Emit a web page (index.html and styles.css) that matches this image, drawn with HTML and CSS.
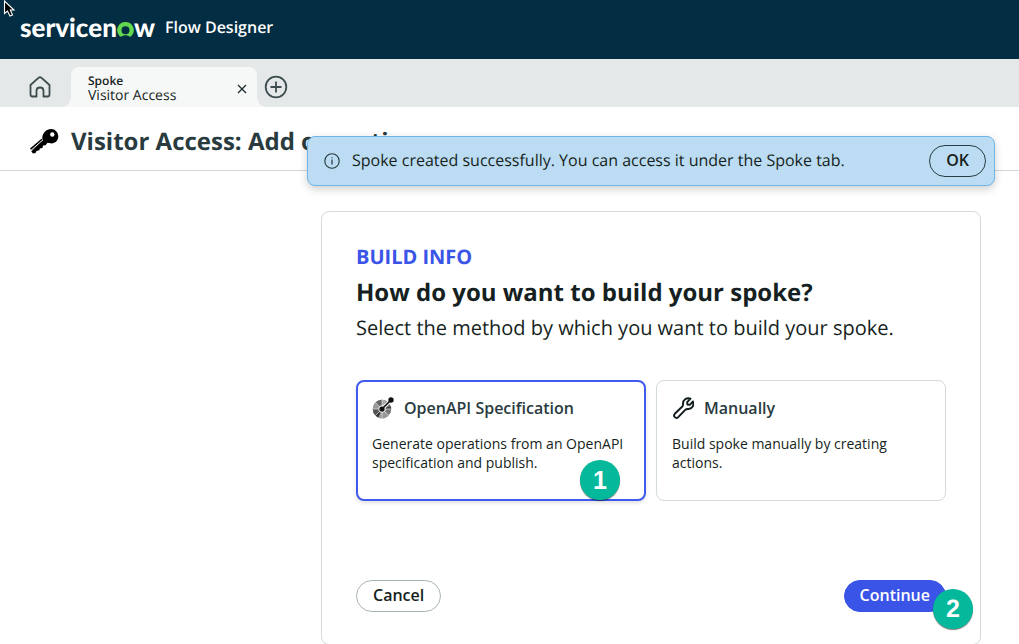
FILE: index.html
```html
<!DOCTYPE html>
<html lang="en">
<head>
<meta charset="utf-8">
<title>Flow Designer</title>
<link rel="stylesheet" href="styles.css">
</head>
<body>
<header class="topbar">
  <div class="brand" aria-label="servicenow"><span>servicen</span><svg class="brand-o" width="17" height="15" viewBox="0 0 17 15" aria-hidden="true"><path d="M8.500 0A8.300 8.300 0 0 0 2.500 14Q3.800 15.300 5 14.300Q8.500 12 12 14.300Q13.200 15.300 14.500 14A8.300 8.300 0 0 0 8.500 0ZM8.500 4.200A4 4 0 1 1 8.500 12.200A4 4 0 1 1 8.500 4.200Z" fill="#62d84e" fill-rule="evenodd"/></svg><span>w</span></div>
  <div class="product">Flow Designer</div>
</header>
<svg class="pointer" width="14" height="18" viewBox="0 0 14 18" aria-hidden="true"><path d="M1.500 1V13.500L4.500 11L7 16L9.500 15L7.300 10H11Z" fill="#000" stroke="#fff" stroke-width="1.100"/></svg>

<nav class="tabs" aria-label="Open tabs">
  <button class="icon-btn home" aria-label="Home"><svg width="22" height="22" viewBox="0 0 22 22" fill="none" stroke="#3d4d4f" stroke-width="1.800" stroke-linejoin="round"><path d="M1.500 9L9.700 1.700Q11 .7 12.300 1.700L20.500 9V18.500Q20.500 20.500 18.500 20.500H14.500V15Q14.500 11.500 11 11.500T7.500 15V20.500H3.500Q1.500 20.500 1.500 18.500Z"/></svg></button>
  <div class="tab">
    <div class="tab-text"><strong>Spoke</strong><span>Visitor Access</span></div>
    <button class="icon-btn close" aria-label="Close tab"><svg width="10" height="10" viewBox="0 0 10 10" stroke="#1d2b2e" stroke-width="1.300"><path d="M1 1L9 9M9 1L1 9"/></svg></button>
  </div>
  <button class="icon-btn add" aria-label="New tab"><svg width="24" height="24" viewBox="0 0 24 24" fill="none" stroke="#3d4d4f" stroke-width="1.800"><circle cx="12" cy="12" r="10.300"/><path d="M12 6.500V17.500M6.500 12H17.500"/></svg></button>
</nav>

<div class="titlebar">
  <svg width="29" height="26" viewBox="0 0 29 26" aria-hidden="true"><path d="M20.500 1C24.500 .5 28.300 4 28.300 8.500C28.200 12.800 24.500 16 20.500 15.300L17.500 14.800L15.500 17.300L13 17.500L12.500 20L9.800 20.500L9.300 22.200L6.500 23L5.500 25L3 25.500L1.300 23.500L12.500 12C11.500 7 14.500 1.800 20.500 1Z" fill="#000"/><path d="M0 20.500L11.500 10.800L13.500 12.500L1.500 22.500Z" fill="#000"/><path d="M1 22.300L13 11.800" stroke="#fff" stroke-width="1"/><circle cx="22.300" cy="6.500" r="2.200" fill="#fff"/></svg>
  <h1>Visitor Access: Add operations</h1>
</div>

<div class="banner" role="status">
  <svg width="16" height="16" viewBox="0 0 16 16" fill="none" stroke="#22343a" aria-hidden="true"><circle cx="8" cy="8" r="7.200" stroke-width="1.100"/><path d="M8 6.500V11.500M8 4.200V5.300" stroke-width="1.200"/></svg>
  <p>Spoke created successfully. You can access it under the Spoke tab.</p>
  <button class="pill ok">OK</button>
</div>

<main class="content">
  <section class="panel">
    <p class="eyebrow">BUILD INFO</p>
    <h2>How do you want to build your spoke?</h2>
    <p class="lead">Select the method by which you want to build your spoke.</p>
    <div class="options">
      <button class="option selected" aria-pressed="true">
        <span class="option-title"><svg width="22" height="22" viewBox="0 0 22 22" aria-hidden="true"><circle cx="10" cy="12" r="6.500" fill="none" stroke="#777" stroke-width="5.500"/><g fill="none" stroke-width="5.500"><path d="M3.500 12A6.500 6.500 0 0 1 5.400 7.400" stroke="#999"/><path d="M5.400 7.400A6.500 6.500 0 0 1 10 5.500" stroke="#666"/><path d="M10 5.500A6.500 6.500 0 0 1 13 6.200" stroke="#aaa"/><path d="M16.200 10A6.500 6.500 0 0 1 16.500 12" stroke="#444"/><path d="M5.400 16.600A6.500 6.500 0 0 1 3.500 12" stroke="#555"/><path d="M7.500 18A6.500 6.500 0 0 1 5.400 16.600" stroke="#333"/><path d="M15 16.200A6.500 6.500 0 0 1 7.500 18" stroke="#999"/></g><path d="M.5 12H6M3.300 5.300L8 10M10 2.500V8M3.300 18.700L8 14M10 16V21.500M12 14L17 18.700M14 12H20" stroke="#eee" stroke-width=".6"/><circle cx="10" cy="12" r="3.400" fill="#ddd"/><path d="M10 12L19 3" stroke="#fff" stroke-width="3.600"/><path d="M10 12L19 3" stroke="#111" stroke-width="1.700"/><circle cx="10" cy="12" r="2.600" fill="#111"/><circle cx="19" cy="3" r="2.700" fill="#111"/></svg>OpenAPI Specification</span>
        <span class="option-text">Generate operations from an OpenAPI specification and publish.</span>
        <span class="step step-one">1</span>
      </button>
      <button class="option" aria-pressed="false">
        <span class="option-title"><svg width="22" height="22" viewBox="0 0 22 22" fill="none" stroke="#101a1c" stroke-width="1.900" stroke-linejoin="round" aria-hidden="true"><path d="M18.500 1.700C14.500 .2 10.700 3 11 7.200Q11.100 8.600 10.300 9.500L2.800 16.800C.7 19.200 3.800 22.300 6.200 20.200L13.500 12.700Q14.400 11.900 15.800 12C20 12.300 22.500 8.300 21 4.500L17.800 7.800L15.400 7.600L15.200 5.200Z"/></svg>Manually</span>
        <span class="option-text">Build spoke manually by creating actions.</span>
      </button>
    </div>
    <div class="actions">
      <button class="pill">Cancel</button>
      <div class="next"><button class="pill primary">Continue</button><span class="step step-two">2</span></div>
    </div>
  </section>
</main>
</body>
</html>
```
FILE: styles.css
```css
* { box-sizing: border-box; }
body { margin: 0; background: #fff; color: #161f21; font-family: "Open Sans", "Noto Sans", sans-serif; text-rendering: geometricPrecision; overflow: hidden; }
h1, h2, p { margin: 0; }
button { font: inherit; color: inherit; cursor: pointer; }
svg { display: block; flex: none; }

.topbar { display: flex; align-items: center; gap: 10px; height: 59px; padding: 0 20px 5px; background: #032d42; color: #fff; }
.brand { display: flex; align-items: baseline; font: 900 26px/30px Lato, sans-serif; }
.product { font-size: 16px; font-weight: 600; line-height: 24px; }
.pointer { position: absolute; left: 3px; top: 0; }

.tabs { display: flex; align-items: flex-end; height: 48px; background: #e4e8e9; }
.icon-btn { display: flex; padding: 0; border: 0; background: none; }
.home { margin: 0 20px 9px 29px; }
.tab { position: relative; display: flex; align-items: center; justify-content: space-between; width: 186px; height: 40px; padding: 3px 10px 0 17px; border-radius: 8px 8px 0 0; background: #f6f8f8; }
.tab::before, .tab::after { content: ""; position: absolute; bottom: 0; width: 8px; height: 8px; }
.tab::before { right: 100%; background: radial-gradient(circle at 0 0, transparent 7px, #f6f8f8 8px); }
.tab::after { left: 100%; background: radial-gradient(circle at 100% 0, transparent 7px, #f6f8f8 8px); }
.tab-text { display: flex; flex-direction: column; font-size: 14px; line-height: 16px; }
.tab-text strong { font-size: 12px; font-weight: 600; line-height: 15px; }
.add { margin: 0 0 8px 7px; }

.titlebar { display: flex; align-items: center; gap: 12px; height: 64px; padding: 7px 30px 0; border-bottom: 1px solid #cfd7d8; }
.titlebar svg { margin-bottom: 2px; }
.titlebar h1 { color: #293b3e; font-size: 24px; font-weight: 700; line-height: 32px; }

.banner { position: absolute; left: 307px; right: 24px; top: 136px; display: flex; align-items: center; gap: 12px; height: 50px; padding: 0 8px 0 16px; border: 1px solid #6fb5e8; border-radius: 8px; background: #bbdcf2; box-shadow: 0 3px 8px rgba(0, 0, 0, .2); font-size: 16px; line-height: 24px; }
.banner p { flex: 1; padding-bottom: 2px; }

.pill { height: 32px; padding: 0 16px 2px; border: 1px solid #a9b5b6; border-radius: 16px; background: none; font-size: 16px; font-weight: 600; line-height: 24px; }
.ok { border-color: #2b3d43; }
.primary { padding: 0 15px 2px; border-color: #3a54e8; background: #3a54e8; color: #fff; }

.content { display: flex; justify-content: center; padding: 40px 24px 0 307px; }
.panel { width: 100%; max-width: 660px; padding: 31px 34px 32px; border: 1px solid #d3dada; border-radius: 8px; }
.eyebrow { color: #3a54e8; font-size: 20px; font-weight: 700; line-height: 28px; }
.panel h2 { margin-top: 4px; font-size: 24px; line-height: 36px; }
.lead { margin-top: 1px; font-size: 20px; line-height: 32px; }
.options { display: grid; grid-template-columns: 1fr 1fr; gap: 10px; margin-top: 36px; }
.option { position: relative; display: flex; flex-direction: column; justify-content: flex-start; gap: 14px; height: 121px; padding: 15px; border: 1px solid #d3dada; border-radius: 8px; background: #fff; text-align: left; }
.option.selected { padding: 14px; border: 2px solid #3f5aec; box-shadow: 0 2px 4px rgba(0, 0, 0, .12); }
.option-title { display: flex; align-items: center; gap: 10px; color: #293b3e; font-size: 16px; font-weight: 600; line-height: 24px; }
.option-text { font-size: 14px; line-height: 19px; }
.step { position: absolute; width: 40px; height: 40px; border-radius: 50%; background: #03b89b; box-shadow: 0 1px 1px rgba(0, 0, 0, .5); color: #fff; font: 700 25px/40px "Liberation Sans", sans-serif; text-align: center; }
.step-one { right: 24px; bottom: -1px; }
.step-two { right: -27px; top: 9px; }
.actions { display: flex; justify-content: space-between; margin-top: 79px; }
.next { position: relative; }
```
